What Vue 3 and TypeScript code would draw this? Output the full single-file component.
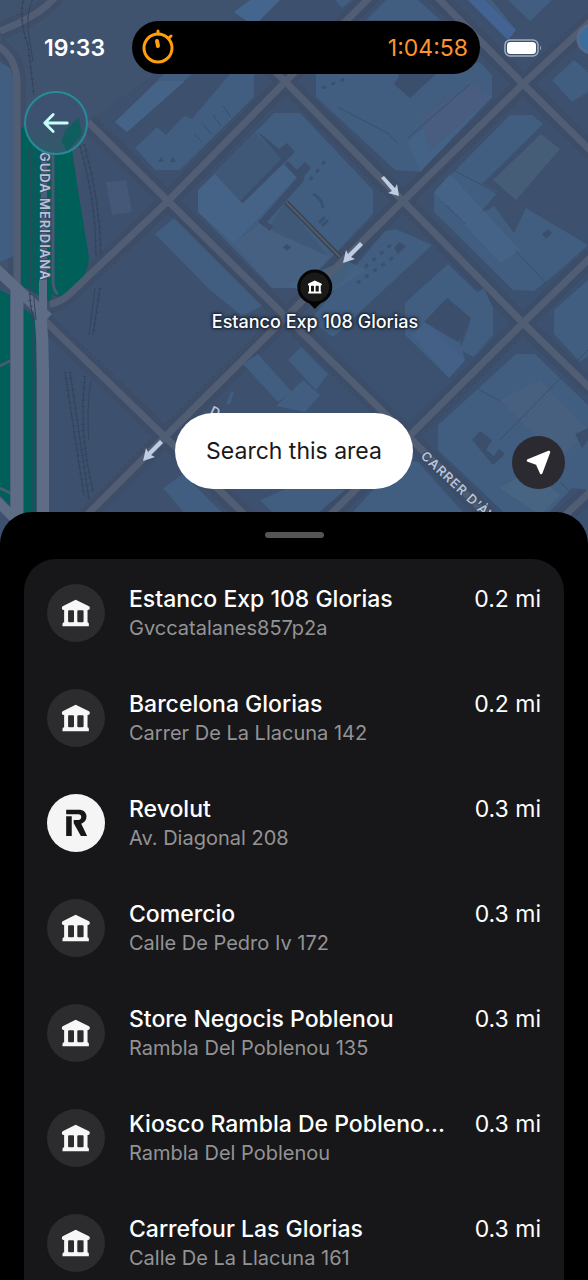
<script setup lang="ts">
interface Place {
  name: string
  address: string
  distance: string
  brand?: 'revolut'
}

const places: Place[] = [
  { name: 'Estanco Exp 108 Glorias', address: 'Gvccatalanes857p2a', distance: '0.2 mi' },
  { name: 'Barcelona Glorias', address: 'Carrer De La Llacuna 142', distance: '0.2 mi' },
  { name: 'Revolut', address: 'Av. Diagonal 208', distance: '0.3 mi', brand: 'revolut' },
  { name: 'Comercio', address: 'Calle De Pedro Iv 172', distance: '0.3 mi' },
  { name: 'Store Negocis Poblenou', address: 'Rambla Del Poblenou 135', distance: '0.3 mi' },
  { name: 'Kiosco Rambla De Pobleno...', address: 'Rambla Del Poblenou', distance: '0.3 mi' },
  { name: 'Carrefour Las Glorias', address: 'Calle De La Llacuna 161', distance: '0.3 mi' },
]

const bankPath =
  'M168 115 L207 134 Q211 136 211 140 Q211 146 205 146 H204 V183 Q208 184 208 188 V195 H128 V188 Q128 184 133 183 V146 H131 Q126 146 126 140 Q126 136 130 134 Z M145 150 V180 Q145 183 148 183 H160 Q163 183 163 180 V150 Q163 147 160 147 H148 Q145 147 145 150 Z M173 150 V180 Q173 183 176 183 H189 Q192 183 192 180 V150 Q192 147 189 147 H176 Q173 147 173 150 Z'

const buildings: string[] = [
  '0,62 10,68 14,80 14,256 0,262',
  '115,122 164,74 192,74 127,132',
  '135,148 157,127 166,135 184,116 192,119 230,74 254,74 254,97 180,170 155,170',
  '234,12 250,0 280,0 254,26',
  '335,0 352,0 342,8',
  '366,20 386,0 418,0 440,20',
  '468,0 492,0 516,30 508,40',
  '508,0 552,0 530,21',
  '552,80 574,60 588,70 588,92 572,102',
  '316,74 398,74 408,96 430,74 480,62 492,75 492,97 420,172 395,170 316,97',
  '198,190 274,113 300,113 373,190 373,214 302,288 272,288 198,212',
  '155,234 174,218 262,306 242,316 210,290',
  '434,192 510,115 532,115 543,124 482,184 498,192 478,215 494,206 514,233 526,208 588,245 558,272 534,291 513,290 434,212',
  '405,303 448,264 477,292 484,288 493,308 493,335 474,357 460,350 470,322 448,298 426,321 465,360 449,378 405,335',
  '310,320 385,231 396,229 432,245 333,337',
  '438,425 516,354 535,354 588,405 588,490 572,488 542,520 512,520 438,450',
  '554,310 588,280 588,356 580,362 554,334',
  '243,364 258,354 292,392 278,402',
  '288,360 301,347 328,374 316,390',
  '276,406 303,380 320,395 305,412',
  '163,488 183,474 230,520 190,520',
  '260,500 290,487 345,490 310,520 280,520',
  '350,515 400,460 418,462 470,520',
  '226,405 231,391 234,392 230,404',
]

const tints: { points: string; fill: string }[] = [
  { points: '106,182 126,180 132,212 112,215', fill: '#4a5b7c' },
  { points: '234,12 250,0 280,0 254,26', fill: '#466891' },
  { points: '468,0 484,0 516,30 508,40', fill: '#43669a' },
  { points: '115,122 158,81 185,81 127,132', fill: '#456589' },
  { points: '408,142 470,85 492,97 420,172', fill: '#466388' },
  { points: '420,118 474,82 490,99 430,151', fill: '#4a5c7d' },
  { points: '493,180 541,134 560,149 516,200', fill: '#4a617b' },
  { points: '434,192 450,174 520,250 500,263', fill: '#466589' },
  { points: '198,190 215,174 241,202 285,162 297,176 234,244 198,212', fill: '#47668a' },
  { points: '234,244 262,222 272,230 330,256 302,288 272,288', fill: '#476181' },
  { points: '288,285 345,260 366,270 320,300', fill: '#466586' },
  { points: '412,335 448,300 465,360 449,378', fill: '#456288' },
  { points: '500,400 540,380 588,430 560,460', fill: '#4a6180' },
  { points: '500,488 530,470 560,495 540,515', fill: '#4a6884' },
]

const roofs: string[] = ['215,174 255,133 281,159 241,202', '270,226 285,203 328,256 274,232']

const courtyards: string[] = [
  '394,84 410,98 436,74 400,74',
  '258,133 261,134 279,149 287,143 295,152 287,160 243,203 240,201 281,159',
  '284,164 288,161 297,170 305,162 311,168 305,175 303,182 267,222 273,226 270,231 258,222 297,178',
  '283,247 287,244 291,247 287,251',
  '424,322 447,298 471,318 458,342',
  '472,440 480,431 492,440 486,450 494,456 499,449 505,454 493,465',
  '394,248 399,242 406,246 398,254',
  '542,234 548,229 552,233 546,239',
  '575,434 588,428 588,440 582,448',
  '158,162 161,157 164,162',
  '170,162 173,157 176,162',
]

const minorRoads: string[] = [
  'M50 304 Q62 303 78 286 L168 201 L285 82 L372 -5',
  'M88 122 L168 201 L286 317 L415 443 L492 520',
  'M262 58 L403 201 L523 323 L592 390',
  'M432 -8 L523 84 L592 152',
  'M592 20 L523 84 L403 201 L165 437 L84 518',
  'M592 256 L523 323 L325 520',
  'M592 490 L560 520',
  'M44 320 L165 437 L250 520',
  'M0 31 Q40 16 56 -4',
  'M-2 46 Q17 58 17 84 V290',
]
</script>

<template>
  <main class="app">
    <section class="map" aria-label="Map">
      <svg class="map-canvas" viewBox="0 0 588 544" preserveAspectRatio="xMidYMin slice" aria-hidden="true">
        <rect width="588" height="544" fill="#3d506e" />
        <path d="M0 0 H260 L90 120 L60 300 L0 280Z" fill="#40536e" />
        <path d="M350 310 L430 240 L588 230 V544 H340 L250 440Z" fill="#3b5270" opacity=".6" />
        <g fill="none" stroke="#3d4a62" stroke-width="18" opacity=".45">
          <path v-for="d in minorRoads" :key="d" :d="d" />
        </g>
        <polygon v-for="p in buildings" :key="p" :points="p" fill="#415d80" />
        <polygon v-for="t in tints" :key="t.points" :points="t.points" :fill="t.fill" opacity=".75" />
        <polygon v-for="p in roofs" :key="p" :points="p" fill="#3f5877" />
        <polygon v-for="p in courtyards" :key="p" :points="p" fill="#3b4f6d" />
        <g fill="none" stroke="#38506e" stroke-width="1">
          <path d="M338 107 L389 134 L397 143 M408 138 L470 84 M194 134 L202 142 M203 124 L211 134 M213 115 L221 126 M223 106 L231 117" />
          <path d="M450 168 L500 195 M446 205 L465 224 M478 389 L500 401 M515 250 L545 282 M570 55 L588 72" />
          <path d="M500 440 L588 350 M430 250 L400 285 M560 482 L570 492" />
        </g>
        <g fill="none" stroke="#39506f" stroke-width="3">
          <path d="M313 194 Q322 198 323 208 M319 223 L325 217 M322 226 L328 220" />
          <path d="M365 267 L392 244 M357 283 L398 254 M310 180 L326 160 M322 88 L345 79" stroke-dasharray="4 6" />
        </g>
        <path d="M286 202 L340 257" stroke="#3a4352" stroke-width="5" />
        <path d="M286 202 L340 257" stroke="#505b6c" stroke-width="2" />

        <g fill="#005f58">
          <path d="M21 128 L60 116 L70 136 L78 190 L89 258 Q88 274 76 286 L65 294 Q58 299 52 294 L50 302 L21 285Z" />
          <path d="M0 290 L10 295 V506 L0 495Z" />
          <path d="M23 308 L36 318 V520 H23Z" />
        </g>
        <path d="M44 126 V300" stroke="#4c5f7b" stroke-width="6" />
        <path d="M44 126 L53 150 V280 Q53 291 58 294" fill="none" stroke="#465a75" stroke-width="3" />
        <path d="M0 366 L12 360 M0 488 L12 494" stroke="#465a75" stroke-width="3" />
        <g fill="none" stroke="#505d73" stroke-width="7">
          <path v-for="d in minorRoads" :key="d" :d="d" />
        </g>
        <g fill="none" stroke="#5e6c86">
          <path d="M-4 269 L48 318" stroke-width="11" />
          <path d="M17 288 V520" stroke-width="13" />
          <path d="M43 280 V320" stroke-width="8" />
          <path d="M40 308 Q43 340 43 372 V520" stroke-width="12" />
          <path d="M-4 500 L20 524" stroke-width="10" />
        </g>
        <g fill="none" stroke="#34445c" stroke-width="1">
          <path d="M24 -4 Q18 20 28 45 L34 95 M34 -4 Q24 15 30 42 L33 62 M30 150 V300 L33 320 V520 M34 150 V300 L36 320" />
          <path d="M80 146 Q96 200 96 256 M84 144 Q100 200 101 255 M100 288 L93 335 M95 288 L89 335 M65 372 L84 496 M70 372 L89 500 M85 376 Q78 430 93 492 M91 380 Q86 410 89 440" />
        </g>
        <g fill="none" stroke="#34445c" stroke-width="3" stroke-dasharray="1 5">
          <path d="M24 -4 Q18 20 28 45 L34 95 M30 150 V300 L33 320 V520" />
          <path d="M80 146 Q96 200 96 256 M84 144 Q100 200 101 255 M100 288 L93 335 M65 372 L84 496 M70 372 L89 500 M85 376 Q78 430 93 492" />
        </g>
        <circle cx="592" cy="39" r="14" fill="#3d6c9e" stroke="#566b8b" stroke-width="3" />

        <g fill="#bfcde2">
          <path d="M381 178 L384 176 L395 188 L397 184 L399 196 L388 193 L392 191Z" />
          <path d="M363 245 L360 242 L348 254 L346 250 L343 263 L355 259 L351 257Z" />
          <path d="M163 443 L160 440 L148 452 L146 448 L143 461 L155 457 L151 455Z" />
        </g>
        <g class="street">
          <text transform="translate(40 152) rotate(90)">GUDA MERIDIANA</text>
          <text transform="translate(420 457) rotate(43)">CARRER D'ÀVILA</text>
          <text transform="translate(209 414) rotate(25)">D</text>
        </g>
      </svg>

      <header class="status">
        <time class="clock">19:33</time>
        <div class="island">
          <svg class="timer" viewBox="0 0 34 36" aria-hidden="true">
            <g fill="none" stroke="#ff9f0a" stroke-width="3" stroke-linecap="round">
              <circle cx="17" cy="20" r="14" />
              <path d="M17 6 V3 M28 10 L30 8" />
              <path d="M16 13 L17 18" stroke-width="4" />
            </g>
          </svg>
          <span>1:04:58</span>
        </div>
        <svg class="battery" viewBox="0 0 38 18" role="img" aria-label="Battery full">
          <rect x="1" y="1" width="33" height="16" rx="5" fill="none" stroke="#a0adbd" stroke-width="1.500" />
          <rect x="3" y="3" width="29" height="12" rx="3.500" fill="#fff" />
          <path d="M36 6.500 Q38 9 36 11.500Z" fill="#a0adbd" />
        </svg>
      </header>

      <button class="back" type="button" aria-label="Back">
        <svg viewBox="0 0 64 64" aria-hidden="true">
          <path d="M42 40 L56 26 L60 44 L44 62 L38 52Z" fill="#06605a" opacity=".8" />
          <path d="M44 32 H20 M29 23 L20 32 L29 41" fill="none" stroke="#c5fff8" stroke-width="3" stroke-linecap="round" stroke-linejoin="round" />
        </svg>
      </button>

      <div class="pin">
        <svg class="marker" viewBox="0 0 36 42" aria-hidden="true">
          <path d="M12 34 L18 40 L24 34Z" fill="#050505" />
          <circle cx="18" cy="18" r="16" fill="#19191a" stroke="#050505" stroke-width="3" />
          <g transform="translate(18 18) scale(0.165) translate(-168 -155)">
            <path :d="bankPath" fill="#fff" fill-rule="evenodd" />
          </g>
        </svg>
        <span>Estanco Exp 108 Glorias</span>
      </div>

      <div class="actions">
        <button class="search" type="button">Search this area</button>
        <button class="locate" type="button" aria-label="My location">
          <svg viewBox="672 558 158 158" aria-hidden="true">
            <path d="M782 606 L720 631 L747 641 L759 668Z" fill="#fff" stroke="#fff" stroke-width="8" stroke-linejoin="round" />
          </svg>
        </button>
      </div>
    </section>

    <section class="sheet" aria-label="Nearby places">
      <div class="grabber"></div>
      <ul class="list">
        <li v-for="place in places" :key="place.name">
          <button class="row" type="button">
            <svg v-if="place.brand" class="avatar brand" viewBox="51 39 176 177" aria-hidden="true">
              <path d="M109 107 H126 V167 H109Z M109 87 H148 C163 87 171 96 171 108 C171 119 165 126 155 130 L173 167 H154 L132 128 V118 H146 C152 118 155 114 155 109 C155 104 152 101 146 101 H109Z" fill="#171718" />
            </svg>
            <svg v-else class="avatar" viewBox="81 67 176 176" aria-hidden="true">
              <path :d="bankPath" fill="#f7f7f7" fill-rule="evenodd" />
            </svg>
            <span class="info">
              <span class="name">{{ place.name }}</span>
              <span class="address">{{ place.address }}</span>
            </span>
            <span class="distance">{{ place.distance }}</span>
          </button>
        </li>
      </ul>
    </section>
  </main>
</template>

<style>
html,
body {
  background: #000;
}
</style>

<style scoped>
.app {
  display: flex;
  flex-direction: column;
  height: 100vh;
  overflow: hidden;
  background: #000;
  color: #fff;
  font-family: Inter, "Liberation Sans", sans-serif;
}

button {
  border: 0;
  padding: 0;
  font: inherit;
  color: inherit;
  cursor: pointer;
}

.map {
  position: relative;
  display: flex;
  flex: 0 0 40vh;
  flex-direction: column;
  align-items: stretch;
}

.map-canvas {
  position: absolute;
  top: 0;
  left: 0;
  width: 100%;
  height: calc(100% + 32px);
}

.street {
  fill: #b6c2d8;
  stroke: #3b4a64;
  stroke-width: 2px;
  paint-order: stroke;
  font-size: 13px;
  font-weight: 600;
  letter-spacing: 1px;
}

.status {
  position: relative;
  display: flex;
  align-items: center;
  gap: 24px;
  padding: 21px 46px 0 44px;
}

.clock {
  flex: none;
  width: 64px;
  font-size: 23px;
  font-weight: 600;
}

.island {
  display: flex;
  flex: 1;
  align-items: center;
  justify-content: space-between;
  height: 53px;
  padding: 0 12px 0 9px;
  border-radius: 27px;
  background: #000;
  color: #ff9330;
  font-size: 23px;
}

.timer {
  width: 34px;
  height: 36px;
  margin-bottom: 4px;
}

.battery {
  flex: none;
  width: 38px;
  height: 18px;
}

.back {
  position: relative;
  align-self: flex-start;
  width: 64px;
  height: 64px;
  margin: 17px 0 0 24px;
  border: 2px solid #248d98;
  border-radius: 50%;
  background: linear-gradient(180deg, #3d5170 45%, #32596b 90%);
}

.back svg {
  display: block;
  width: 60px;
  height: 60px;
}

.pin {
  position: absolute;
  top: 269px;
  left: 315px;
  display: flex;
  flex-direction: column;
  align-items: center;
  transform: translateX(-50%);
  font-size: 18px;
  font-weight: 500;
  line-height: 22px;
  white-space: nowrap;
  text-shadow: 0 0 2px #17202e, 0 0 2px #17202e, 0 0 3px #17202e, 0 0 4px #17202e;
}

.marker {
  width: 36px;
  height: 42px;
}

.actions {
  position: relative;
  display: grid;
  grid-template-columns: 1fr auto 1fr;
  align-items: end;
  margin-top: auto;
  padding: 0 23px 23px;
}

.search {
  grid-column: 2;
  padding: 23px 31px;
  border-radius: 38px;
  background: #fff;
  color: #19191b;
  font-size: 23px;
  line-height: 30px;
}

.locate {
  justify-self: end;
  width: 53px;
  height: 53px;
  border-radius: 50%;
  background: #2b2a30;
}

.locate svg {
  display: block;
  width: 53px;
  height: 53px;
}

.sheet {
  position: relative;
  display: flex;
  flex: 1;
  flex-direction: column;
  min-height: 0;
  padding: 20px 24px 0;
  border-radius: 32px 32px 0 0;
  background: #000;
}

.grabber {
  flex: none;
  align-self: center;
  width: 59px;
  height: 6px;
  border-radius: 3px;
  background: #555557;
}

.list {
  flex: 1;
  min-height: 0;
  margin: 21px 0 0;
  padding: 25px 23px 0;
  border-radius: 32px 32px 0 0;
  background: #171719;
  list-style: none;
  overflow-y: auto;
  scrollbar-width: none;
}

.row {
  display: flex;
  align-items: flex-start;
  width: 100%;
  height: 105px;
  background: none;
  text-align: left;
}

.avatar {
  flex: none;
  width: 58px;
  height: 58px;
  margin-right: 24px;
  border-radius: 50%;
  background: #2c2c2e;
}

.brand {
  background: #f5f5f5;
}

.info {
  display: flex;
  flex: 1;
  flex-direction: column;
  min-width: 0;
}

.name {
  overflow: hidden;
  font-size: 23px;
  font-weight: 500;
  line-height: 30px;
  text-overflow: ellipsis;
  white-space: nowrap;
}

.address {
  color: #939395;
  font-size: 20px;
  line-height: 28px;
}

.distance {
  flex: none;
  margin-left: 20px;
  font-size: 23px;
  line-height: 30px;
}
</style>
